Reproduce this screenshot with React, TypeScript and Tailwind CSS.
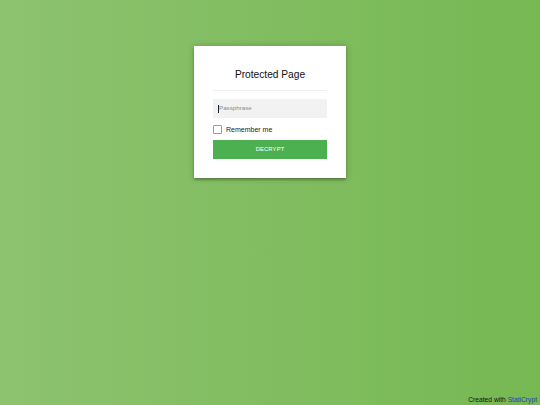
import React from "react";

export default function App() {
  return (
    <div
      className="w-[540px] h-[405px] flex flex-col bg-[linear-gradient(to_left,#76b852,#8dc26f)] overflow-hidden"
      style={{ fontFamily: '"Liberation Sans", Arial, sans-serif' }}
    >
      <div className="mt-[46px] mx-auto w-[152px] bg-white px-[19px] pt-[22px] pb-[19px] shadow-[0_0_7px_rgba(0,0,0,0.2),0_2px_2px_rgba(0,0,0,0.24)]">
        <div className="text-center text-[10.2px] leading-[13px] text-[#111]">Protected Page</div>
        <div className="mt-[9px] h-px bg-[#f0f0f0]" />
        <div className="mt-[8px] h-[19px] bg-[#f2f2f2] flex items-center pl-[5px]">
          <span className="w-px h-[8px] bg-[#222]" />
          <span className="text-[6.2px] text-[#8a8a8a] leading-none">Passphrase</span>
        </div>
        <label className="mt-[7px] flex items-center gap-[4px] h-[8px]">
          <span className="w-[9px] h-[9px] border border-[#9a9a9a] rounded-[1px] bg-white" />
          <span className="text-[7px] leading-none text-[#222]">Remember me</span>
        </label>
        <div className="mt-[7px] h-[19px] bg-[#4caf50] flex items-center justify-center">
          <span className="text-[5.9px] text-white leading-none tracking-[0.1px]">DECRYPT</span>
        </div>
      </div>
      <div className="flex-1" />
      <div className="flex justify-end pr-[3px] pb-[1px]">
        <span className="text-[6.7px] leading-[9px] text-[#111]">
          Created with <span className="text-[#1a3fb8]">StatiCrypt</span>
        </span>
      </div>
    </div>
  );
}
